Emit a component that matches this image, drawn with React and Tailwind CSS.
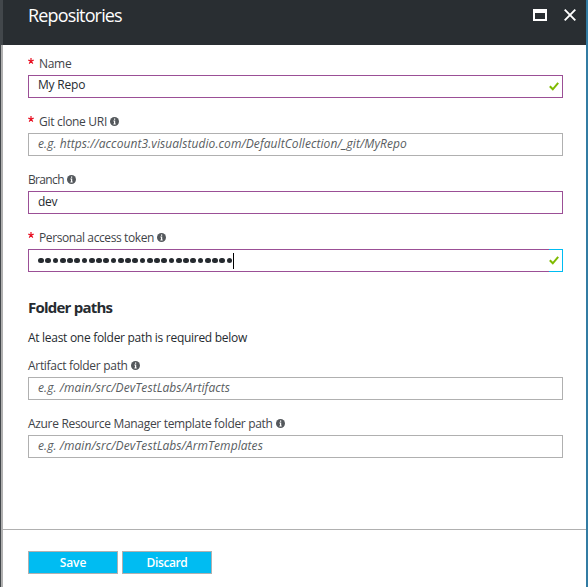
import React from 'react';

function InfoIcon() {
  return (
    <svg width="9" height="9" viewBox="0 0 9 9" className="ml-[3.5px] shrink-0">
      <circle cx="4.5" cy="4.5" r="4.5" fill="#54585c" />
      <path d="M4 1.5h1.2v1.2H4zM3.4 3.5h1.8v3h.5v1H3.4v-1H4v-2h-.6z" fill="#fff" />
    </svg>
  );
}

function CheckIcon() {
  return (
    <svg width="10" height="9" viewBox="0 0 10 9" fill="none" className="shrink-0">
      <path d="M.8 4.2 3.8 7.3 9.2 .9" stroke="#7fba00" strokeWidth="2" />
    </svg>
  );
}

function Field({ label, labelClass, required, info, boxClass = 'border-[#9b4f96]', className = 'mb-3.5', children }) {
  return (
    <div className={className}>
      <div className="flex h-[21px] items-center pb-0.5 text-[#3f4449]">
        {required && (
          <svg width="6" height="6" viewBox="0 0 6 6" className="mr-[5px] mb-[5px] shrink-0">
            <path d="M3 0v3M.3 2.1 3 3l2.7-.9M1.2 5.6 3 3l1.8 2.6" fill="none" stroke="#e81123" strokeWidth="1.2" />
          </svg>
        )}
        <span className={labelClass}>{label}</span>
        {info && <InfoIcon />}
      </div>
      <div className={`relative flex h-[23px] items-center border bg-white pr-[3px] pl-[9px] ${boxClass}`}>
        {children}
      </div>
    </div>
  );
}

export default function App() {
  return (
    <div
      className="flex h-[587px] w-[588px] flex-col overflow-hidden border-r-2 border-[#327ca3] bg-white text-xs whitespace-nowrap text-[#262b30]"
      style={{ fontFamily: '"Open Sans", "Noto Sans", sans-serif' }}
    >
      <header className="flex h-[45px] shrink-0 items-start border-l-3 border-[#42474b] bg-[#292e32] pt-[3px] pr-2.5 pl-[25px]">
        <h1 className="flex-1 text-lg leading-6 tracking-[-0.85px] text-white">Repositories</h1>
        <svg width="14" height="12" viewBox="0 0 14 12" className="mt-1.5 mr-[17px]">
          <path fillRule="evenodd" d="M0 0h14v12H0zM2 4v6h10V4z" fill="#fff" />
        </svg>
        <svg width="12" height="12" viewBox="0 0 12 12" className="mt-1.5">
          <path d="M.7.7 11.3 11.3M11.3.7.7 11.3" stroke="#fff" strokeWidth="1.9" />
        </svg>
      </header>

      <div className="flex min-h-0 flex-1">
        <div className="w-px bg-[#42474b]" />
        <div className="w-0.5 bg-[#b0b0b0]" />
        <div className="flex flex-1 flex-col">
          <main className="h-[484px] pt-[9px] pr-[23px] pl-[25px]">
            <Field label="Name" labelClass="tracking-[-0.3px]" required>
              <span className="flex-1 pb-[3px] tracking-[-0.2px]">My Repo</span>
              <CheckIcon />
            </Field>
            <Field label="Git clone URI" labelClass="tracking-[-0.3px]" required info boxClass="border-[#b0b0b0]">
              <span className="pb-0.5 tracking-[0.08px] text-[#595d61] italic">
                e.g. https://account3.visualstudio.com/DefaultCollection/_git/MyRepo
              </span>
            </Field>
            <Field label="Branch" labelClass="tracking-[-0.65px]" info>
              <span className="pb-px tracking-[-0.3px]">dev</span>
            </Field>
            <Field label="Personal access token" labelClass="tracking-[-0.4px]" required info className="mb-6">
              <div className="flex gap-[1.5px]">
                {Array.from({ length: 27 }, (_, i) => (
                  <i key={i} className="size-[5.75px] rounded-full bg-[#262b30]" />
                ))}
              </div>
              <div className="ml-px h-4 w-px bg-black" />
              <div className="absolute -top-px -right-px flex h-[23px] w-3.5 items-center border border-l-0 border-[#00bcf2]">
                <CheckIcon />
              </div>
            </Field>

            <h2 className="h-[22px] text-[15px] leading-[22px] font-bold tracking-[-0.78px]">Folder paths</h2>
            <p className="mt-[9px] mb-[7px] h-[22px] leading-[21px] tracking-[-0.29px]">
              At least one folder path is required below
            </p>

            <Field label="Artifact folder path" labelClass="tracking-[-0.3px]" info boxClass="border-[#b0b0b0]">
              <span className="pb-0.5 tracking-[0.07px] text-[#595d61] italic">e.g. /main/src/DevTestLabs/Artifacts</span>
            </Field>
            <Field
              label="Azure Resource Manager template folder path"
              labelClass="tracking-[-0.32px]"
              info
              boxClass="border-[#b0b0b0]"
            >
              <span className="pb-0.5 tracking-[0.07px] text-[#595d61] italic">e.g. /main/src/DevTestLabs/ArmTemplates</span>
            </Field>
          </main>
          <footer className="flex flex-1 items-start gap-1 border-t border-[#b0b0b0] pt-[21px] pl-[25px] font-semibold text-white">
            <button className="h-[23px] w-[90px] border border-[#b0b0b0] bg-[#00bcf2] tracking-[-0.1px]">Save</button>
            <button className="h-[23px] w-[90px] border border-[#b0b0b0] bg-[#00bcf2] tracking-[-0.4px]">Discard</button>
          </footer>
        </div>
      </div>
    </div>
  );
}
